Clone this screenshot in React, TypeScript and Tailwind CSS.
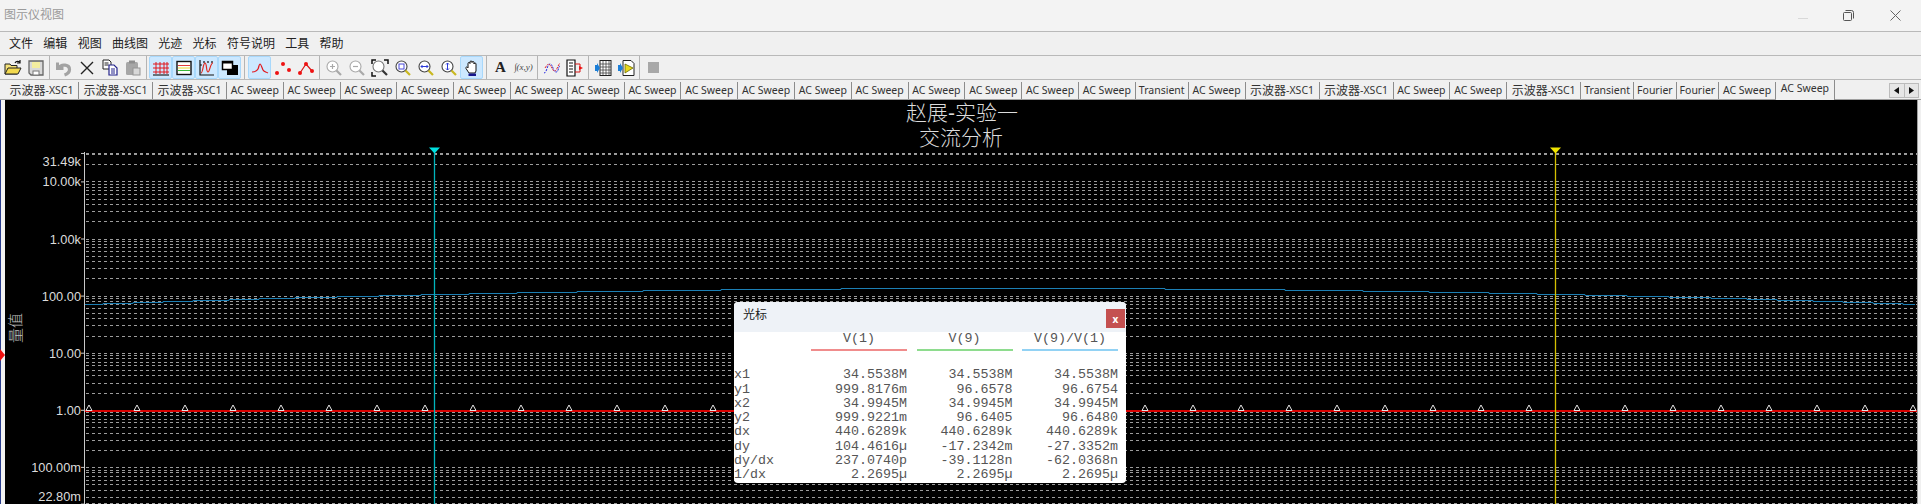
import type { ReactNode } from 'react'

const CJK = '"Liberation Sans","Noto Sans CJK SC",sans-serif'

const menus = ['文件', '编辑', '视图', '曲线图', '光迹', '光标', '符号说明', '工具', '帮助']

type Tab = { label: string; w: string }
const scope: Tab = { label: '-XSC1', w: 'w-[74px]' }
const ac: Tab = { label: 'AC Sweep', w: 'w-[56.8px]' }
const tr: Tab = { label: 'Transient', w: 'w-[53px]' }
const fo: Tab = { label: 'Fourier', w: 'w-[42.5px]' }

const tabs: Tab[] = [
  scope, scope, scope,
  ...Array<Tab>(16).fill(ac),
  tr, ac, scope, scope, ac, ac, scope, tr, fo, fo, ac,
]

const rows = [
  ['x1', '34.5538M', '34.5538M', '34.5538M'],
  ['y1', '999.8176m', '96.6578', '96.6754'],
  ['x2', '34.9945M', '34.9945M', '34.9945M'],
  ['y2', '999.9221m', '96.6405', '96.6480'],
  ['dx', '440.6289k', '440.6289k', '440.6289k'],
  ['dy', '104.4616µ', '-17.2342m', '-27.3352m'],
  ['dy/dx', '237.0740p', '-39.1128n', '-62.0368n'],
  ['1/dx', '2.2695µ', '2.2695µ', '2.2695µ'],
]

function Ico({ children }: { children: ReactNode }) {
  return (
    <svg width="18" height="18" viewBox="0 0 18 18" fill="none">
      {children}
    </svg>
  )
}

function Tool({ active, children }: { active?: boolean; children: ReactNode }) {
  return (
    <div
      className={`flex h-[23px] w-[23px] shrink-0 items-center justify-center rounded-[2px] border ${
        active ? 'border-[#a8d8fb] bg-[#cce8ff]' : 'border-transparent'
      }`}
    >
      {children}
    </div>
  )
}

function Sep({ wide }: { wide?: boolean }) {
  return (
    <div className={`flex h-[23px] shrink-0 justify-center ${wide ? 'w-[7px]' : 'w-[5px]'}`}>
      <div className="h-full w-px bg-[#b4b4b4]" />
    </div>
  )
}

function Lens({ color = '#a9a9a9', handle = '#a9a9a9', children }: { color?: string; handle?: string; children?: ReactNode }) {
  return (
    <>
      <circle cx="7.5" cy="7.5" r="5.5" fill="#fff" stroke={color} strokeWidth="1.1" />
      <path d="M11.5 11.5L16 16" stroke={handle} strokeWidth="2.2" />
      {children}
    </>
  )
}

function Toolbar() {
  return (
    <div className="flex h-[24px] items-center border-b border-[#b9b9b9] bg-[#f0f0f0] pl-px">
      <Tool>
        <Ico>
          <path d="M1 5h5l1 1.5h6V15H1z" fill="#f5e27a" stroke="#222" />
          <path d="M1 15l3-6h13l-3 6z" fill="#f2d94e" stroke="#222" />
          <path d="M11 4c1-2 3-2 5-1M16 1v3h-3" stroke="#111" strokeWidth="1.2" />
        </Ico>
      </Tool>
      <Tool>
        <Ico>
          <path d="M2 2h14v14H4l-2-2z" fill="#d9d9d9" stroke="#666" strokeWidth="1.3" />
          <rect x="5" y="3" width="8" height="6" fill="#f4eda0" />
          <rect x="6" y="12" width="6" height="4" fill="#fff" stroke="#777" />
        </Ico>
      </Tool>
      <Sep />
      <Tool>
        <Ico>
          <path d="M2.500 3.500v6h6" stroke="#a3a3a3" strokeWidth="3" />
          <path d="M3.500 9c3-4.500 11-3.500 11 1.500 0 2.500-2 4.500-5 5.500" stroke="#a3a3a3" strokeWidth="3.200" />
        </Ico>
      </Tool>
      <Tool>
        <Ico>
          <path d="M3 3l12 12M15 3L3 15" stroke="#222" strokeWidth="1.4" />
        </Ico>
      </Tool>
      <Tool>
        <Ico>
          <path d="M2 1h6l2 2v7H2z" fill="#fff" stroke="#222" />
          <path d="M3.5 4h4M3.5 6h4" stroke="#222" />
          <path d="M8 6h5l3 3v7H8z" fill="#fff" stroke="#23238c" strokeWidth="1.2" />
          <path d="M10 10h4M10 12h4M10 14h4" stroke="#23238c" />
        </Ico>
      </Tool>
      <Tool>
        <Ico>
          <rect x="2" y="3" width="12" height="13" rx="1.5" fill="#a6a6a6" />
          <rect x="5" y="1.5" width="6" height="3" fill="#8e8e8e" />
          <rect x="9" y="9" width="7" height="7" fill="#d8d8d8" stroke="#949494" />
        </Ico>
      </Tool>
      <Sep />
      <Tool active>
        <Ico>
          <path d="M1 5h16M1 9h16M1 13h16M4 3v12M8 3v12M12 3v12M15 3v12" stroke="#e0161c" />
          <path d="M1 16h16" stroke="#222" strokeWidth="1.2" />
        </Ico>
      </Tool>
      <Tool active>
        <Ico>
          <rect x="2" y="2.5" width="14" height="13" fill="#fff" stroke="#111" strokeWidth="1.4" />
          <path d="M3 6.5h12" stroke="#e23a3a" />
          <path d="M3 9h12" stroke="#e8d62e" />
          <path d="M3 11.5h12" stroke="#38b838" />
        </Ico>
      </Tool>
      <Tool active>
        <Ico>
          <path d="M2 1v15h14M6 2v2M10 2v2M14 2v2M2 6h2" stroke="#111" strokeWidth="1.2" />
          <path d="M3 14c2 0 2-10 4-10s1 9 3 9 2-9 5-9" stroke="#e0261c" strokeWidth="1.2" />
        </Ico>
      </Tool>
      <Tool active>
        <Ico>
          <rect x="6" y="6" width="11" height="10" fill="#000" />
          <rect x="1.5" y="2.5" width="10" height="8" fill="#fff" stroke="#000" strokeWidth="1.5" />
          <path d="M2 3.5h9" stroke="#000" strokeWidth="2" />
        </Ico>
      </Tool>
      <Sep wide />
      <Tool active>
        <Ico>
          <path d="M1 13c3 0 5-1 6-3s1-5 2-5 2 4 3 6 3 2 5 3" stroke="#e2161c" strokeWidth="1.2" />
        </Ico>
      </Tool>
      <Tool>
        <Ico>
          <circle cx="3" cy="14" r="2" fill="#ee1111" />
          <circle cx="9" cy="5" r="2" fill="#ee1111" />
          <circle cx="15" cy="11" r="2" fill="#ee1111" />
        </Ico>
      </Tool>
      <Tool>
        <Ico>
          <path d="M3 14L9 5l6 7" stroke="#d81818" strokeWidth="1.2" />
          <circle cx="3" cy="14" r="2" fill="#ee1111" />
          <circle cx="9" cy="5" r="2" fill="#ee1111" />
          <circle cx="15" cy="12" r="2" fill="#ee1111" />
        </Ico>
      </Tool>
      <Sep />
      <Tool>
        <Ico>
          <Lens>
            <path d="M5 7.5h5M7.5 5v5" stroke="#a9a9a9" strokeWidth="1.2" />
          </Lens>
        </Ico>
      </Tool>
      <Tool>
        <Ico>
          <Lens>
            <path d="M5 7.5h5" stroke="#a9a9a9" strokeWidth="1.2" />
          </Lens>
        </Ico>
      </Tool>
      <Tool>
        <Ico>
          <Lens color="#777" handle="#333">
            <path d="M1 5V1h4M13 1h4v4M1 13v4h4" stroke="#111" strokeWidth="1.5" />
          </Lens>
        </Ico>
      </Tool>
      <Tool>
        <Ico>
          <Lens color="#444" handle="#c9b820">
            <rect x="5" y="5" width="5" height="5" stroke="#4a4ad8" />
          </Lens>
        </Ico>
      </Tool>
      <Tool>
        <Ico>
          <Lens color="#444" handle="#c9b820">
            <path d="M4 7.5h7M5.500 6l-1.500 1.500 1.500 1.500M9.500 6l1.500 1.500-1.500 1.500" stroke="#2c3ad8" />
          </Lens>
        </Ico>
      </Tool>
      <Tool>
        <Ico>
          <Lens color="#444" handle="#c9b820">
            <path d="M7.500 4v7M6 5.500l1.500-1.500 1.500 1.500M6 9.500l1.500 1.500 1.500-1.500" stroke="#2c3ad8" />
          </Lens>
        </Ico>
      </Tool>
      <Tool active>
        <Ico>
          <path d="M5 9V4.500a1 1 0 012 0V3a1 1 0 012 0v.5a1 1 0 012 0V5a1 1 0 012 0v7l-1 2H6L3 9.500c-.8-1.200.8-2 1.500-1z" fill="#fff" stroke="#111" />
          <path d="M5.500 14.500h7.500V17H5.500z" fill="#16168c" />
        </Ico>
      </Tool>
      <div className="w-px shrink-0" />
      <Sep />
      <Tool>
        <span className="text-[15px] font-bold leading-none text-[#222]" style={{ fontFamily: '"Liberation Serif",serif' }}>A</span>
      </Tool>
      <Tool>
        <span className="whitespace-nowrap text-[9px] italic leading-none text-[#444]" style={{ fontFamily: '"Liberation Serif",serif' }}>∫(x,y)</span>
      </Tool>
      <Sep />
      <Tool>
        <Ico>
          <path d="M1 14c3 0 3-9 6-9s3 8 6 8 2-6 4-6" stroke="#2323e0" strokeDasharray="2 1" />
          <path d="M2 9c2-3 3-5 5-3s3 7 5 6 3-6 5-8" stroke="#e4262c" strokeDasharray="2 1" />
        </Ico>
      </Tool>
      <Tool>
        <Ico>
          <path d="M1 1h8v16H1z" fill="#fff" stroke="#111" strokeWidth="1.2" />
          <path d="M3 4h4M3 7h4M3 10h4M3 13h4" stroke="#111" />
          <path d="M9 5h5v8H9" stroke="#d81818" />
          <path d="M13 7l4 2-4 2z" fill="#ee1111" />
        </Ico>
      </Tool>
      <Sep />
      <Tool>
        <Ico>
          <rect x="6" y="1.5" width="11" height="15" fill="#fff" stroke="#222" />
          <path d="M6 5h11M6 8h11M6 11h11M6 14h11M9 2v14M12 2v14M15 2v14" stroke="#444" strokeWidth=".8" />
          <path d="M1 6h2V4l3 5-3 5v-2H1z" fill="#1c7fd8" />
        </Ico>
      </Tool>
      <Tool>
        <Ico>
          <path d="M6 1.5h8l3 3v12H6z" fill="#fff" stroke="#222" />
          <path d="M8 5l8 4-8 5z" fill="#e8d81c" stroke="#6a6a00" strokeWidth=".8" />
          <path d="M1 6h2V4l3 5-3 5v-2H1z" fill="#1c7fd8" />
        </Ico>
      </Tool>
      <Sep />
      <Tool>
        <div className="h-[11px] w-[11px] bg-[#a8a8a8]" />
      </Tool>
    </div>
  )
}

function TabBar() {
  return (
    <div className="flex h-[20px] items-end border-b border-[#a0a0a0] bg-[#f0f0f0] pl-[5px] pr-[2px]">
      {tabs.map((t, i) => (
        <div
          key={i}
          className={`flex h-[17px] shrink-0 items-center justify-center whitespace-nowrap border-r border-[#8c8c8c] text-[10.5px] leading-none text-[#333] ${t.w}`}
        >
          {t.label === '-XSC1' && <span className="text-[12px]">示波器</span>}
          {t.label}
        </div>
      ))}
      <div className="mb-[-1px] flex h-[20px] w-[59px] shrink-0 items-start justify-center border-r border-[#8c8c8c] bg-[#f0f0f0] pt-[3px] text-[10.5px] leading-none text-[#333]">
        AC Sweep
      </div>
      <div className="ml-auto mb-[1px] flex h-[15px] w-[30px] border border-[#bcbcbc] bg-[#e6e6e6]">
        <div className="flex flex-1 items-center justify-center border-r border-[#bcbcbc]">
          <svg width="5" height="7" viewBox="0 0 5 7"><path d="M5 0v7L0 3.500z" fill="#111" /></svg>
        </div>
        <div className="flex flex-1 items-center justify-center">
          <svg width="5" height="7" viewBox="0 0 5 7"><path d="M0 0v7l5-3.500z" fill="#111" /></svg>
        </div>
      </div>
    </div>
  )
}

const y0 = 410.3
const decade = 57.1
const yOf = (v: number) => y0 - decade * Math.log10(v)

function gridLines() {
  const ys: number[] = [yOf(31490)]
  for (let d = -2; d <= 4; d++) {
    for (let m = 1; m <= 9; m++) {
      const v = m * Math.pow(10, d)
      if (v >= 0.0228 && v <= 31490) ys.push(yOf(v))
    }
  }
  ys.push(503.5)
  return ys.map((y) => Math.floor(y) + 0.5)
}

// label, tick value, extra drop of the label below its tick
const ticks: [string, number, number][] = [
  ['31.49k', 31490, 8],
  ['10.00k', 10000, 0],
  ['1.00k', 1000, 0],
  ['100.00', 100, 0],
  ['10.00', 10, 0],
  ['1.00', 1, 0],
  ['100.00m', 0.1, 0],
  ['22.80m', 0.0228, 0],
]

function bluePoints() {
  const pts: string[] = []
  let last = -1
  for (let x = 85; x <= 1917; x += 6) {
    const y = Math.round(288 + Math.pow(x - 1000, 2) * 1.91e-5) + 0.5
    if (last >= 0 && y !== last) pts.push(`${x},${last}`)
    pts.push(`${x},${y}`)
    last = y
  }
  return pts.join(' ')
}

function Chart() {
  const markers: number[] = []
  for (let x = 89; x < 1917; x += 48) markers.push(x)

  return (
    <svg className="block h-[404px] w-full" viewBox="5 100 1912 404" style={{ fontFamily: CJK }}>
      <rect x="5" y="100" width="1912" height="404" fill="#000" />
      {gridLines().map((y, i) => (
        <line key={i} x1="86" x2="1917" y1={y} y2={y} stroke="#9c9c9c" strokeDasharray="3 3" />
      ))}
      <line x1="84.5" x2="84.500" y1="152" y2="504" stroke="#c8c8c8" />
      {ticks.map(([label, v, drop]) => (
        <g key={label}>
          <line x1="81" x2="84" y1={yOf(v)} y2={yOf(v)} stroke="#c8c8c8" />
          <text x="81" y={Math.min(yOf(v) + 4.5 + drop, 501)} textAnchor="end" fontSize="12.800" fill="#dcdcdc">
            {label}
          </text>
        </g>
      ))}
      <text x="962" y="120" textAnchor="middle" fontSize="21" fontWeight="300" fill="#dcdcdc">赵展-实验一</text>
      <text x="961" y="144.500" textAnchor="middle" fontSize="21" fontWeight="300" fill="#dcdcdc">交流分析</text>
      <text transform="translate(21 328) rotate(-90)" textAnchor="middle" fontSize="15" fontWeight="300" fill="#c0c0c0">量值</text>

      <polyline points={bluePoints()} fill="none" stroke="#1c7fb4" />
      <line x1="85" x2="1917" y1="411" y2="411" stroke="#d80000" strokeWidth="2" />
      {markers.map((x) => (
        <path key={x} d={`M${x} 405l-3 5.500h6z`} fill="none" stroke="#e4e4e4" />
      ))}

      <line x1="434.5" x2="434.5" y1="150" y2="504" stroke="#00b4bc" strokeWidth="1.3" />
      <path d="M429 147.500h11l-5.500 6z" fill="#00e0e0" />
      <line x1="1555.5" x2="1555.5" y1="150" y2="504" stroke="#d4c000" strokeWidth="1.3" />
      <path d="M1550 147.500h11l-5.500 6z" fill="#f0e400" />
    </svg>
  )
}

function CursorPanel() {
  const heads = [
    ['V(1)', 'bg-[#f08c8c]'],
    ['V(9)', 'bg-[#8edc8e]'],
    ['V(9)/V(1)', 'bg-[#92d2f4]'],
  ]
  return (
    <div className="absolute left-[734px] top-[302px] h-[181px] w-[392px] overflow-hidden rounded-[4px] bg-white">
      <div className="flex h-[30px] items-start justify-between bg-[#eef2f7] pl-[9px] pr-px">
        <span className="mt-[7px] text-[12px] leading-none text-[#222]">光标</span>
        <div className="mt-[7px] flex h-[19px] w-[19px] items-center justify-center bg-[#c45050] text-[10px] font-bold leading-none text-white">
          x
        </div>
      </div>
      <div
        className="grid grid-cols-[67.5px_96px_96px_96px] gap-x-[9.5px] text-[13.33px] leading-[14.3px] text-[#555]"
        style={{ fontFamily: '"Liberation Mono",monospace' }}
      >
        <div />
        {heads.map(([h, c]) => (
          <div key={h} className="text-center">
            {h}
            <div className={`mt-[3px] h-[2px] ${c}`} />
          </div>
        ))}
        <div className="col-span-4 h-[17px]" />
        {rows.map((r) =>
          r.map((c, i) => (
            <div key={r[0] + i} className={i === 0 ? '' : 'text-right'}>
              {c}
            </div>
          )),
        )}
      </div>
    </div>
  )
}

export default function App() {
  return (
    <div className="relative h-[504px] w-[1921px] overflow-hidden bg-[#f0f0f0]" style={{ fontFamily: '"Noto Sans","Noto Sans CJK SC",sans-serif' }}>
      <div className="flex h-[32px] items-start border-b border-[#b9b9b9] bg-[#f3f3f3] pl-[4px]">
        <span className="mt-[9px] text-[12px] leading-none text-[#9a9a9a]">图示仪视图</span>
        <div className="ml-auto flex items-center">
          <div className="mr-[35px] mt-[15px] h-px w-[10px] bg-[#d8d8d8]" />
          <svg className="mr-[36px] mt-[10px]" width="11" height="11" viewBox="0 0 11 11" fill="none">
            <rect x=".5" y="2.500" width="8" height="8" rx="1" stroke="#555" />
            <path d="M2.500 .5h6a2 2 0 012 2v6" stroke="#555" />
          </svg>
          <svg className="mr-[20px] mt-[10px]" width="11" height="11" viewBox="0 0 11 11" fill="none">
            <path d="M.5 .5l10 10M10.500 .5l-10 10" stroke="#666" />
          </svg>
        </div>
      </div>
      <div className="flex h-[24px] items-center border-b border-[#b9b9b9] bg-[#f0f0f0] pl-[9px]">
        <div className="flex gap-[10.3px] text-[12px] leading-none text-[#222]">
          {menus.map((m) => (
            <span key={m}>{m}</span>
          ))}
        </div>
      </div>
      <Toolbar />
      <TabBar />
      <div className="flex">
        <div className="w-px shrink-0 bg-[#2b3f8f]" />
        <div className="w-[4px] shrink-0 bg-[#f4f4f4]" />
        <div className="min-w-0 flex-1">
          <Chart />
        </div>
        <div className="w-[4px] shrink-0 border-l border-[#a0a0a0] bg-[#f0f0f0]" />
      </div>
      <div className="absolute left-0 top-[349px] h-0 w-0 border-y-[6px] border-l-[5px] border-y-transparent border-l-[#f01010]" />
      <CursorPanel />
    </div>
  )
}
